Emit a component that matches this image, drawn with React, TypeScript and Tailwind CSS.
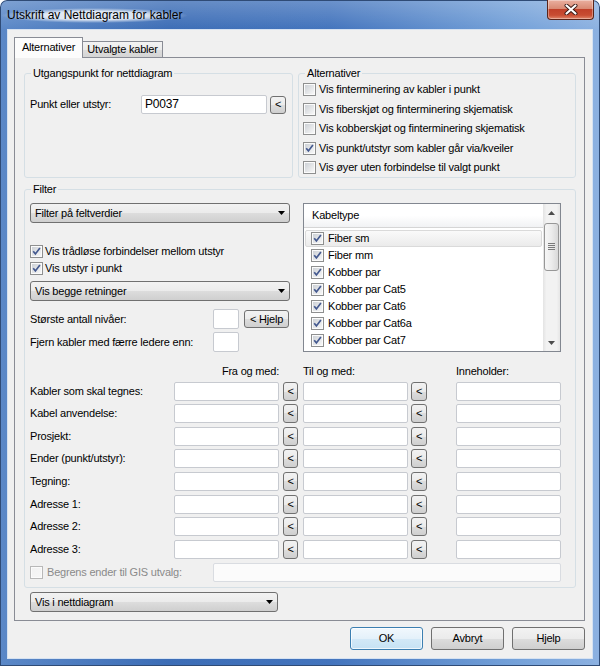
import { useId } from 'react';

const btnFace =
  'bg-[linear-gradient(180deg,#f2f2f2_0%,#ebebeb_50%,#dddddd_50%,#cfcfcf_100%)] border border-[#707070] rounded-[3px]';

const alternativer = [
  { label: 'Vis finterminering av kabler i punkt', checked: false },
  { label: 'Vis fiberskjøt og finterminering skjematisk', checked: false },
  { label: 'Vis kobberskjøt og finterminering skjematisk', checked: false },
  { label: 'Vis punkt/utstyr som kabler går via/kveiler', checked: true },
  { label: 'Vis øyer uten forbindelse til valgt punkt', checked: false },
];

const kabeltyper = [
  'Fiber sm',
  'Fiber mm',
  'Kobber par',
  'Kobber par Cat5',
  'Kobber par Cat6',
  'Kobber par Cat6a',
  'Kobber par Cat7',
];

// row heights alternate so the inputs land on the same pixels as the dialog
const filterRows = [
  { label: 'Kabler som skal tegnes:', h: 'h-[22px]' },
  { label: 'Kabel anvendelse:', h: 'h-[23px]' },
  { label: 'Prosjekt:', h: 'h-[22px]' },
  { label: 'Ender (punkt/utstyr):', h: 'h-[23px]' },
  { label: 'Tegning:', h: 'h-[23px]' },
  { label: 'Adresse 1:', h: 'h-[22px]' },
  { label: 'Adresse 2:', h: 'h-[23px]' },
  { label: 'Adresse 3:', h: 'h-[23px]' },
];

function CheckBox({ checked = false, disabled = false }: { checked?: boolean; disabled?: boolean }) {
  const gid = 'cb' + useId().replace(/[^a-zA-Z0-9]/g, '');
  return (
    <svg width="13" height="13" viewBox="0 0 13 13" className="shrink-0">
      <defs>
        <linearGradient id={gid} x1="0" y1="0" x2="1" y2="1">
          <stop offset="0" stopColor={disabled ? '#f2f2f2' : '#cdd1d6'} />
          <stop offset="1" stopColor={disabled ? '#f6f6f6' : '#f7f7f7'} />
        </linearGradient>
      </defs>
      <rect x="0.5" y="0.5" width="12" height="12" fill="#fbfbfb" stroke={disabled ? '#b8b8b8' : '#8e8f8f'} />
      <rect x="2" y="2" width="9" height="9" fill={`url(#${gid})`} />
      {checked && (
        <path d="M3.2 6.3 L5.4 8.9 L9.9 3.1" fill="none" stroke="#44598f" strokeWidth="1.7" />
      )}
    </svg>
  );
}

function TextBox({ className = '', value }: { className?: string; value?: string }) {
  return (
    <div
      className={`flex items-center rounded-[2px] border border-[#c7cad0] bg-white pl-[3px] ${className}`}
    >
      {value}
    </div>
  );
}

function PickButton({ className = '' }: { className?: string }) {
  return (
    <div className={`flex items-center justify-center text-[11px] ${btnFace} ${className}`}>&lt;</div>
  );
}

function Combo({ text, className = '' }: { text: string; className?: string }) {
  return (
    <div className={`flex h-[20px] items-center justify-between pl-[4px] pr-[4px] ${btnFace} ${className}`}>
      <span>{text}</span>
      <svg width="7" height="4" viewBox="0 0 7 4">
        <path d="M0 0H7L3.5 4Z" fill="#000" />
      </svg>
    </div>
  );
}

function GroupBox({
  title,
  className = '',
  children,
}: {
  title: string;
  className?: string;
  children?: React.ReactNode;
}) {
  return (
    <div className={`rounded-[3px] border border-[#d5dfe5] ${className}`}>
      <div className="-mt-[7px] ml-[6px] h-[13px] w-fit bg-[#f0f0f0] px-[2px] leading-[13px]">{title}</div>
      {children}
    </div>
  );
}

function Triangle({ up }: { up?: boolean }) {
  return (
    <svg width="7" height="4" viewBox="0 0 7 4">
      <path d={up ? 'M0 4H7L3.5 0Z' : 'M0 0H7L3.5 4Z'} fill="#4d4d4d" />
    </svg>
  );
}

function ScrollBar() {
  return (
    <div className="flex h-full w-[17px] flex-col bg-[linear-gradient(90deg,#e3e3e3_0%,#f2f2f2_20%,#f2f2f2_80%,#e6e6e6_100%)]">
      <div className="flex h-[17px] items-center justify-center">
        <Triangle up />
      </div>
      <div className="mx-[1px] mt-[2px] flex h-[48px] items-center justify-center rounded-[3px] border border-[#979797] bg-[linear-gradient(90deg,#f6f6f6_0%,#ececec_50%,#d9d9d9_100%)]">
        <svg width="7" height="8" viewBox="0 0 7 8">
          <path d="M0 0.5H7M0 2.5H7M0 4.5H7M0 6.5H7" stroke="#7a7a7a" strokeWidth="1" />
        </svg>
      </div>
      <div className="flex-1" />
      <div className="flex h-[17px] items-center justify-center">
        <Triangle />
      </div>
    </div>
  );
}

function KabelList() {
  return (
    <div className="flex h-[149px] w-[258px] border border-[#828790] bg-white">
      <div className="flex w-[239px] flex-col">
        <div className="flex h-[24px] items-center border-b border-[#d5d5d5] bg-[linear-gradient(180deg,#ffffff_0%,#ffffff_50%,#f1f2f4_100%)] pl-[8px]">
          Kabeltype
        </div>
        <div className="pt-[2px]">
          {kabeltyper.map((k, i) => (
            <div
              key={k}
              className={`mx-[1px] flex h-[17px] items-center gap-[4px] rounded-[2px] border pl-[5px] ${
                i === 0
                  ? 'border-[#dadada] bg-[linear-gradient(180deg,#fafafa_0%,#ebebeb_100%)]'
                  : 'border-transparent'
              }`}
            >
              <CheckBox checked />
              <span>{k}</span>
            </div>
          ))}
        </div>
      </div>
      <ScrollBar />
    </div>
  );
}

export default function App() {
  return (
    <div className="relative h-[666px] w-[600px] overflow-hidden rounded-t-[7px] bg-[linear-gradient(180deg,rgba(255,255,255,0.22)_0%,rgba(255,255,255,0)_30px),linear-gradient(90deg,#5b88c7_0%,#3c6db6_28%,#4374bd_55%,#73a0d8_85%,#8cb1e1_100%)] font-['Liberation_Sans',Arial,sans-serif] text-[11px] leading-[13px] tracking-[-0.2px] text-black shadow-[inset_0_0_0_1px_#2f4b76]">
      {/* title bar */}
      <div className="flex h-[30px] items-start justify-between pl-[7px]">
        <span className="mt-[8px] rounded-full bg-[radial-gradient(closest-side,rgba(255,255,255,0.8)_55%,rgba(255,255,255,0)_100%)] px-[6px] -ml-[6px] text-[12px] leading-[15px] tracking-normal text-black">
          Utskrift av Nettdiagram for kabler
        </span>
        <div className="mr-[6px] flex h-[20px] w-[47px] items-center justify-center rounded-b-[4px] border border-t-0 border-[#5a2419] bg-[linear-gradient(180deg,#eab0a0_0%,#d98a74_45%,#c1412a_50%,#c84d33_80%,#e0866a_100%)] shadow-[inset_0_0_0_1px_rgba(255,255,255,0.35)]">
          <svg width="14" height="11" viewBox="0 0 14 11">
            <path d="M2.5 1.5 L11.5 9.5 M11.5 1.5 L2.5 9.5" stroke="#3a1a16" strokeWidth="4" strokeLinecap="round" />
            <path d="M2.5 1.5 L11.5 9.5 M11.5 1.5 L2.5 9.5" stroke="#ffffff" strokeWidth="2.2" strokeLinecap="round" />
          </svg>
        </div>
      </div>

      {/* client area */}
      <div className="mx-[8px] h-[628px] w-[584px] bg-[#f0f0f0] pt-[7px] shadow-[0_0_0_1px_#d6e2f1]">
        {/* tabs */}
        <div className="ml-[6px] flex h-[20px] items-end">
          <div className="relative z-10 -mb-px flex h-[21px] w-[69px] items-center justify-center border border-b-0 border-[#898c95] bg-[#fcfcfc] pb-[2px]">
            Alternativer
          </div>
          <div className="flex h-[16px] w-[80px] items-center justify-center border border-b-0 border-l-0 border-[#898c95] bg-[linear-gradient(180deg,#f3f3f3_0%,#ebebeb_50%,#dddddd_50%,#d5d5d5_100%)]">
            Utvalgte kabler
          </div>
        </div>

        {/* tab page */}
        <div className="ml-[6px] h-[564px] w-[571px] border border-[#898c95] bg-[#f0f0f0] pl-[9px]">
          <div className="mt-[15px] flex gap-[5px]">
            <GroupBox title="Utgangspunkt for nettdiagram" className="h-[105px] w-[269px]">
              <div className="mt-[15px] flex items-center pl-[5px]">
                <span className="w-[111px]">Punkt eller utstyr:</span>
                <TextBox className="h-[19px] w-[126px] text-[12px]" value="P0037" />
                <PickButton className="ml-[3px] h-[18px] w-[16px]" />
              </div>
            </GroupBox>
            <GroupBox title="Alternativer" className="h-[105px] w-[278px]">
              <div className="pl-[4px]">
                {alternativer.map((a) => (
                  <div key={a.label} className="flex h-[19.5px] items-center gap-[3px]">
                    <CheckBox checked={a.checked} />
                    <span>{a.label}</span>
                  </div>
                ))}
              </div>
            </GroupBox>
          </div>

          <GroupBox title="Filter" className="mt-[11px] h-[399px] w-[552px]">
            <div className="pl-[5px]">
              <div className="mt-[7px] flex items-start gap-[13px]">
                <div className="w-[260px]">
                  <Combo text="Filter på feltverdier" className="w-[260px]" />
                  <div className="mt-[20px] flex h-[17px] items-center gap-[2px]">
                    <CheckBox checked />
                    <span>Vis trådløse forbindelser mellom utstyr</span>
                  </div>
                  <div className="flex h-[17px] items-center gap-[2px]">
                    <CheckBox checked />
                    <span>Vis utstyr i punkt</span>
                  </div>
                  <Combo text="Vis begge retninger" className="mt-[4px] w-[260px]" />
                  <div className="mt-[8px] flex items-center">
                    <span className="w-[183px]">Største antall nivåer:</span>
                    <TextBox className="h-[20px] w-[26px]" />
                    <div className={`ml-[5px] flex h-[18px] w-[45px] items-center justify-center ${btnFace}`}>
                      &lt; Hjelp
                    </div>
                  </div>
                  <div className="mt-[3px] flex items-center">
                    <span className="w-[183px]">Fjern kabler med færre ledere enn:</span>
                    <TextBox className="h-[20px] w-[26px]" />
                  </div>
                </div>
                <KabelList />
              </div>

              {/* range table */}
              <div className="mt-[13px] flex h-[13px] items-center">
                <span className="w-[249px] text-right">Fra og med:</span>
                <span className="ml-[24px] w-[153px]">Til og med:</span>
                <span>Inneholder:</span>
              </div>
              <div className="mt-[4px]">
                {filterRows.map((r) => (
                  <div key={r.label} className={`flex items-start ${r.h}`}>
                    <span className="flex h-[19px] w-[144px] items-center">{r.label}</span>
                    <TextBox className="h-[19px] w-[105px]" />
                    <PickButton className="ml-[4px] h-[19px] w-[15px]" />
                    <TextBox className="ml-[5px] h-[19px] w-[105px]" />
                    <PickButton className="ml-[3px] h-[19px] w-[16px]" />
                    <TextBox className="ml-[29px] h-[19px] w-[105px]" />
                  </div>
                ))}
                <div className="flex items-center">
                  <div className="flex w-[183px] items-center gap-[4px] text-[#8a8a8a]">
                    <CheckBox disabled />
                    <span>Begrens ender til GIS utvalg:</span>
                  </div>
                  <div className="h-[19px] w-[348px] rounded-[2px] border border-[#d9dce1] bg-[#fbfbfb]" />
                </div>
              </div>
            </div>
          </GroupBox>

          <Combo text="Vis i nettdiagram" className="ml-[6px] mt-[4px] w-[248px]" />
        </div>

        {/* dialog buttons */}
        <div className="mt-[6px] flex justify-end gap-[8px] pr-[7px]">
          <button
            type="button"
            className="flex h-[23px] w-[73px] items-center justify-center rounded-[3px] border border-[#3c7fb1] bg-[linear-gradient(180deg,#f1f8fd_0%,#e4f1fa_50%,#d3e9f7_50%,#c6e2f4_100%)] shadow-[inset_0_0_0_1px_rgba(255,255,255,0.7)]"
          >
            OK
          </button>
          <button type="button" className={`flex h-[23px] w-[73px] items-center justify-center ${btnFace}`}>
            Avbryt
          </button>
          <button type="button" className={`flex h-[23px] w-[73px] items-center justify-center ${btnFace}`}>
            Hjelp
          </button>
        </div>
      </div>
    </div>
  );
}
